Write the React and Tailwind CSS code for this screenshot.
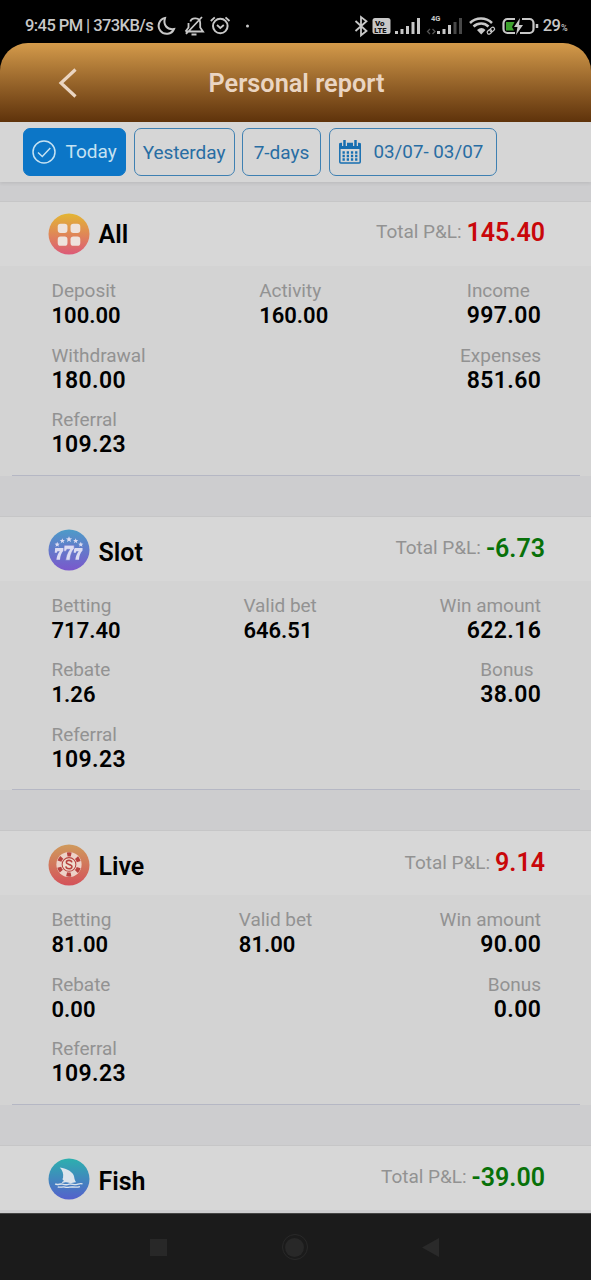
import React from "react";

const sections = [
  {
    title: "All", icon: "all", total: "145.40", gain: true, lead: true,
    rows: [
      [["Deposit", "100.00"], ["Activity", "160.00"], ["Income", "997.00", "start", true]],
      [["Withdrawal", "180.00", "start", true], ["Expenses", "851.60", "end", true]],
      [["Referral", "109.23", "start", true]],
    ],
  },
  {
    title: "Slot", icon: "slot", total: "-6.73", gain: false,
    rows: [
      [["Betting", "717.40"], ["Valid bet", "646.51"], ["Win amount", "622.16", "end", true]],
      [["Rebate", "1.26"], ["Bonus", "38.00", "start", true]],
      [["Referral", "109.23", "start", true]],
    ],
  },
  {
    title: "Live", icon: "live", total: "9.14", gain: true,
    rows: [
      [["Betting", "81.00"], ["Valid bet", "81.00"], ["Win amount", "90.00", "end", true]],
      [["Rebate", "0.00"], ["Bonus", "0.00", "end", true]],
      [["Referral", "109.23", "start", true]],
    ],
  },
  { title: "Fish", icon: "fish", total: "-39.00", gain: false, rows: [] },
];

const gradients = {
  all: ["#e3b634", "#dc5a78"],
  slot: ["#4d9bc8", "#7a58cc"],
  live: ["#cf9a5c", "#d4525a"],
  fish: ["#2cb0ae", "#5560cc"],
};

function Glyph({ kind }) {
  if (kind === "all") {
    return (
      <g fill="#eee3dc">
        <rect x="9.500" y="10.500" width="9.500" height="9" rx="2.800" />
        <rect x="22" y="10.500" width="9.500" height="9" rx="2.800" />
        <rect x="9.500" y="23" width="9.500" height="9" rx="2.800" />
        <rect x="22" y="23" width="9.500" height="9" rx="2.800" />
      </g>
    );
  }
  if (kind === "slot") {
    const seven = "M0 0h8.2v2.6C5.8 5.2 5 8 4.7 11.500H1.200C1.600 8 2.800 5.200 4.500 3.200H2.200L1.600 4.600H-.400z";
    const star = "M0-2.500.700-.800 2.500-.700 1.100.500 1.600 2.300 0 1.300-1.600 2.300-1.100.500-2.500-.700-.700-.800z";
    return (
      <g fill="#dcdcf2">
        <path d={star} transform="translate(20.500 10) scale(1.200)" />
        <path d={star} transform="translate(14 11.500)" />
        <path d={star} transform="translate(27 11.500)" />
        <path d={star} transform="translate(9 15)" />
        <path d={star} transform="translate(32 15)" />
        <path d={seven} transform="translate(7 18.500)" />
        <path d={seven} transform="translate(25.500 18.500)" />
        <path d={seven} transform="translate(15.800 15.800) scale(1.200 1.280)" stroke="#6b6fc9" strokeWidth=".5" />
      </g>
    );
  }
  if (kind === "live") {
    return (
      <g>
        <circle cx="20.5" cy="20" r="12.3" fill="#edd2c8" />
        <circle cx="20.5" cy="20" r="9.9" fill="none" stroke="#b7423f" strokeWidth="4" strokeDasharray="4.4 5.967" strokeDashoffset="2.2" transform="rotate(-90 20.5 20)" />
        <circle cx="20.5" cy="20" r="6.7" fill="#efdccf" stroke="#b7423f" strokeWidth="1" />
        <path d="M23.3 17.9c-.5-2.6-5.4-2.5-5.4 0 0 2.7 5.5 1.4 5.5 4.3 0 2.6-5.6 2.6-6-.3" fill="none" stroke="#b7423f" strokeWidth="1.5" />
      </g>
    );
  }
  return (
    <g>
      <path d="M11.5 9.2c7.5.8 13.3 4.8 14 9 .3 2 .6 3.600 2 5.500-2.500-.3-4 1.200-6.200.8-2-.4-3.300-1.100-5.200-.5l-2.600.3c.5-1.100 1.400-1.500 2.200-2-.8-.4-1.500-1-1.600-2 .5-.3.7-.8.6-1.300.6-3.500-.4-7-3.200-9.800z" fill="#dce4ec" />
      <path d="M7 25.300c2.400 1.700 4.700-.6 7.100.2 2.300.8 4.200 1 6.500.1 2.400-.8 4.500.7 6.800.4 2.200-.3 3.500-1.600 6.300-.7M9.500 28.100c2.600 1.200 4.600-.5 7.200.3 2.500.8 4.900-.3 7.300-.1 2.100.2 4.700.4 7.200-.4" fill="none" stroke="#dce4ec" strokeWidth="1.300" />
    </g>
  );
}

function CategoryIcon({ kind }) {
  const [from, to] = gradients[kind];
  return (
    <svg className="size-[42px] shrink-0" viewBox="0 0 41 41">
      <defs>
        <linearGradient id={"badge-" + kind} x1="0" y1="0" x2="0" y2="1">
          <stop stopColor={from} />
          <stop offset="1" stopColor={to} />
        </linearGradient>
      </defs>
      <circle cx="20.5" cy="20.5" r="20" fill={"url(#badge-" + kind + ")"} />
      <Glyph kind={kind} />
    </svg>
  );
}

function Stat({ item }) {
  const [label, value, align, wide] = item;
  return (
    <div className={"flex flex-col " + (align === "end" ? "items-end" : "items-start")}>
      <span className="text-[19px] leading-6 tracking-[-0.03px] text-[#929292]">{label}</span>
      <span className={"leading-[25px] font-semibold text-black " + (wide ? "text-[23px] tracking-[0.4px] -mr-[0.4px]" : "text-[22px]")}>{value}</span>
    </div>
  );
}

function Section({ data }) {
  return (
    <section className="h-[314.5px] shrink-0">
      <div className={"flex h-[65px] items-center border-t border-[#c6c6c7] bg-[#d7d7d7] pr-[46px] pl-12 " + (data.lead ? "" : "pt-[3px]")}>
        <CategoryIcon kind={data.icon} />
        <h2 className={"ml-[8.5px] text-[25px] font-semibold text-black " + (data.lead ? "mt-0.5" : "mt-[5px]")}>{data.title}</h2>
        <p className="mb-[3px] ml-auto flex items-center gap-[5px]">
          <span className="text-[19px] tracking-[-0.03px] text-[#929292]">Total P&amp;L:</span>
          <b className={"text-[25px] font-semibold " + (data.gain ? "text-[#c9070a]" : "text-[#087109]")}>{data.total}</b>
        </p>
      </div>
      {data.rows.length > 0 && (
        <div className="h-[209.5px] bg-[#d3d3d3] pr-[11px] pl-3">
          <div className="flex h-full flex-col gap-[15.5px] border-b border-[#b5b7c4] pt-[13px] pr-[39px] pl-[39.5px]">
            {data.rows.map((row, i) => (
              <div key={i} className="flex h-[49px] justify-between">
                {row.map((item) => <Stat key={item[0]} item={item} />)}
              </div>
            ))}
          </div>
        </div>
      )}
    </section>
  );
}

function StatusBar() {
  return (
    <div className="flex h-[43px] shrink-0 items-end pr-[24px] pb-[5px] pl-[25px] text-[#c8c8c8]">
      <div className="flex h-6 items-center">
        <span className="w-[129px] pt-px text-[16.5px] font-medium tracking-[-0.57px] whitespace-nowrap">9:45 PM | 373KB/s</span>
        <svg className="ml-[2px] h-6 w-[96px]" viewBox="0 0 96 24" fill="none" stroke="currentColor" strokeWidth="2">
          <path d="M9 4A8 8 0 1 0 18 15C11 16 7 11 9 4z" />
          <path d="M29.500 17.500h17.500l-2.800-4V9c0-6-8.800-6-9.800-1.500M29.500 17.500l3-4V9M30 20 46 3M35.500 20.500h5" strokeWidth="1.800" />
          <circle cx="64.3" cy="12" r="7.3" />
          <path d="m61 11 3.300 3 3.500-3M54.800 7l4-3.700M73.500 7l-4-3.700" strokeWidth="1.800" />
          <circle cx="91.5" cy="12" r="1.5" fill="currentColor" stroke="none" />
        </svg>
      </div>
      <div className="ml-auto flex h-6 items-center">
        <svg className="h-6 w-[188px]" viewBox="0 0 188 24" fill="none" stroke="currentColor" strokeWidth="1.8">
          <path d="m1.500 7 11 10L7 21.300V3l5.500 4.200L1.500 17" />
          <rect x="18.500" y="4" width="18" height="16" rx="2.500" fill="currentColor" stroke="none" />
          <text x="21" y="12" fontSize="8" fontWeight="900" fill="#111" stroke="none">Vo</text>
          <text x="20.300" y="19" fontSize="7.500" fontWeight="900" fill="#111" stroke="none">LTE</text>
          <g strokeWidth="3">
            <path d="M42.500 20v-3M48 20v-5M53.500 20v-8M59 20V8M64.500 20V4" />
            <path d="M84.500 20v-3M90 20v-5M95.500 20V11" />
            <path d="M101 20V8M106.500 20V4" stroke="#484848" />
          </g>
          <path d="m76 15-2.500 2.500L76 20M78.500 15l2.500 2.500-2.500 2.500" stroke="#555" strokeWidth="1.300" />
          <text x="77" y="7" fontSize="7.500" fontWeight="700" fill="currentColor" stroke="none">4G</text>
          <path d="M116 9c6-6 16-6 22 0M119.500 12.500c4.500-4 11-4 15 0" strokeWidth="2.500" />
          <path d="M123 16c3-2.700 6-2.700 8.500 0l-4.300 4.400z" fill="currentColor" stroke="none" />
          <rect x="133" y="16.500" width="5" height="3.500" rx="1.700" transform="rotate(-40 135 18)" strokeWidth="1.200" />
          <rect x="136" y="14" width="5" height="3.500" rx="1.700" transform="rotate(-40 138 16)" strokeWidth="1.200" />
          <path d="M161 5h-7.500a4 4 0 0 0-4 4v6a4 4 0 0 0 4 4h7.500M168 5h7.500a4 4 0 0 1 4 4v6a4 4 0 0 1-4 4H166" strokeWidth="2.200" />
          <path d="M152 8h8.500l-2.500 5 2 3.500H152z" fill="#3ea12e" stroke="none" />
          <path d="m166 4-6 9h3.500l-1.500 8 7-10h-4z" fill="currentColor" stroke="none" />
          <path d="M183 10v4" strokeWidth="2.500" />
        </svg>
        <span className="ml-[1px] flex items-baseline pt-px text-[16.5px] font-medium tracking-[-0.7px]">29<span className="ml-px text-[9px]">%</span></span>
      </div>
    </div>
  );
}

const tab = "flex h-12 items-center rounded-[7px] border-[1.5px] text-[18.5px] whitespace-nowrap";

export default function App() {
  return (
    <div className="flex h-[1280px] w-[591px] flex-col overflow-hidden bg-black font-['Roboto',sans-serif]">
      <StatusBar />
      <header className="grid h-[79px] shrink-0 grid-cols-[1fr_auto_1fr] items-center rounded-t-[28px] bg-linear-to-b from-[#d49b4b] to-[#5f330b]">
        <svg className="ml-[58px] h-8 w-5" viewBox="0 0 20 32" fill="none" stroke="#ead5c2" strokeWidth="3.2">
          <path d="M17.500 2.500 3 16l14.500 13.500" />
        </svg>
        <h1 className="text-[25.3px] font-semibold text-[#ead5c2] pt-0.5 pl-0.5">Personal report</h1>
      </header>
      <main className="flex min-h-0 flex-1 flex-col overflow-hidden bg-[#cdcdcf]">
        <nav className="flex h-[60px] shrink-0 items-start gap-[7.5px] bg-[#d6d6d6] pt-[6px] pl-[23px] text-[#286da3] shadow-[0_2px_3px_rgba(0,0,0,0.07)]">
          <button className={tab + " w-[103px] border-[#0c76c7] bg-[#0c76c7] pl-[8px] text-[#c6e2f2]"}>
            <svg className="mr-[9.5px] size-6" viewBox="0 0 24 24" fill="none" stroke="currentColor" strokeWidth="1.500">
              <circle cx="12" cy="12" r="11" />
              <path d="m6 12.500 4.300 4 8-8.500" />
            </svg>
            <span className="text-[19px]">Today</span>
          </button>
          <button className={tab + " w-[101px] justify-center border-[#3e80b2] pt-[3px] text-[19px] tracking-[-0.05px]"}>Yesterday</button>
          <button className={tab + " w-[79px] justify-center border-[#3e80b2] pt-[3px] text-[19px]"}>7-days</button>
          <button className={tab + " w-[168px] border-[#3e80b2] pl-[9px]"}>
            <svg className="mr-[13px] h-6 w-[22px]" viewBox="0 0 22 24" fill="none" stroke="#176fb1">
              <rect x=".8" y="3.500" width="20.400" height="19.500" rx="1" strokeWidth="1.500" />
              <path d="M.5 6h21" strokeWidth="6" />
              <path d="M5.500 0v6M16.500 0v6" stroke="#d6d6d6" strokeWidth="5" />
              <path d="M5.500 0v6M16.500 0v6" strokeWidth="2.500" />
              <path d="M3.500 12.500h15M3.500 16h15M3.500 19.500h15" strokeWidth="2.300" strokeDasharray="2.300 1.900" />
            </svg>
            <span className="text-[18.8px]">03/07- 03/07</span>
          </button>
        </nav>
        <div className="flex flex-col pt-[19px]">
          {sections.map((s) => <Section key={s.title} data={s} />)}
        </div>
      </main>
      <footer className="flex h-[67px] shrink-0 items-center justify-between border-t border-[#444] bg-[#1b1b1b] pr-[152px] pl-[150px]">
        <span className="size-[17px] bg-[#282828]" />
        <span className="flex size-[26px] items-center justify-center rounded-full border border-[#292929]"><span className="size-[19px] rounded-full bg-[#282828]" /></span>
        <svg className="h-[19px] w-[17px]" viewBox="0 0 17 19" fill="#2a2a2a"><path d="M17 0v19L0 9.500z" /></svg>
      </footer>
    </div>
  );
}
